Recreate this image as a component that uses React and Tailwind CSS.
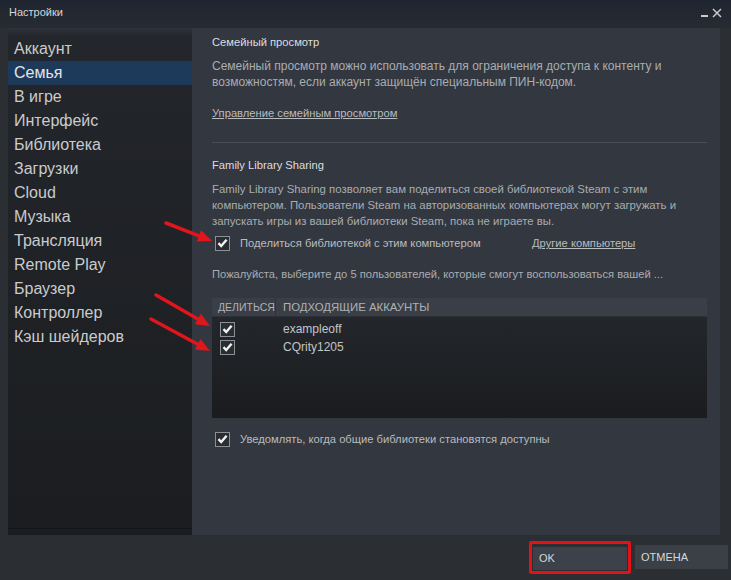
const menu = [
  "Аккаунт",
  "Семья",
  "В игре",
  "Интерфейс",
  "Библиотека",
  "Загрузки",
  "Cloud",
  "Музыка",
  "Трансляция",
  "Remote Play",
  "Браузер",
  "Контроллер",
  "Кэш шейдеров",
];

const accounts = ["exampleoff", "CQrity1205"];

const Check = ({ className = "" }) => (
  <span
    className={`flex items-center justify-center w-[15px] h-[15px] border border-[#8b9096] bg-[#2a2d32] ${className}`}
  >
    <svg width="11" height="10" viewBox="0 0 11 10">
      <path d="M1.5 5.2 L4.2 8 L9.6 1.8" stroke="#f2f2f2" strokeWidth="2.4" fill="none" />
    </svg>
  </span>
);

const Arrow = ({ x1, y1, x2, y2 }) => {
  const a = Math.atan2(y2 - y1, x2 - x1);
  const l = 14;
  const w = 6;
  const bx = x2 - l * Math.cos(a);
  const by = y2 - l * Math.sin(a);
  const px = -Math.sin(a) * w;
  const py = Math.cos(a) * w;
  return (
    <g>
      <line x1={x1} y1={y1} x2={bx} y2={by} stroke="#e0161c" strokeWidth="3.5" strokeLinecap="round" />
      <polygon points={`${x2},${y2} ${bx + px},${by + py} ${bx - px},${by - py}`} fill="#e0161c" />
    </g>
  );
};

const App = () => {
  return (
    <div
      className="relative w-[731px] h-[580px] bg-[#2b2e33] flex flex-col overflow-hidden"
      style={{ fontFamily: '"Liberation Sans", Arial, sans-serif' }}
    >
      {/* Title bar */}
      <div className="h-[28px] flex items-center justify-between pl-[9px] pr-[9px] pb-[3px] bg-gradient-to-b from-[#1f2530] to-[#272b32]">
        <span className="text-[11px] text-[#d4d6d8]">Настройки</span>
        <div className="flex items-end gap-[4px]">
          <span className="w-[7px] h-[2px] bg-[#c8cacc] mb-[1px]" />
          <svg width="10" height="10" viewBox="0 0 10 10">
            <path d="M1 1 L9 9 M9 1 L1 9" stroke="#c8cacc" strokeWidth="1.5" />
          </svg>
        </div>
      </div>

      {/* Body */}
      <div className="flex h-[507px] pl-[8px] pr-[11px]">
        {/* Sidebar */}
        <div className="w-[184px] flex flex-col bg-gradient-to-b from-[#23262b] to-[#1b1d20]">
          <div className="h-[8px] bg-gradient-to-b from-[#2e333b] to-[#23262b]" />
          <ul className="flex flex-col pt-[1px]">
            {menu.map((item, index) => (
              <li
                key={index}
                className={`h-[24px] pl-[6px] flex items-center text-[16px] text-[#c9cbcd] ${
                  index === 1 ? "bg-[#1e3a5a] text-[#e3e6e9]" : ""
                }`}
              >
                {item}
              </li>
            ))}
          </ul>
          <div className="flex-1" />
          <div className="h-[1px] bg-[#15171a] mb-[6px]" />
        </div>

        {/* Content */}
        <div className="flex-1 bg-[#33373f] pl-[20px] pr-[13px] pt-[6px] text-[11.2px] leading-[16px] text-[#a9adb1]">
          <h2 className="text-[#dcdee0] h-[16px]">Семейный просмотр</h2>
          <p className="mt-[8px] text-[12px]">
            Семейный просмотр можно использовать для ограничения доступа к контенту и
            <br />
            возможностям, если аккаунт защищён специальным ПИН-кодом.
          </p>
          <a href="#" className="block mt-[15px] h-[16px] underline text-[#b9bcbf]">
            Управление семейным просмотром
          </a>
          <div className="mt-[21px] h-[1px] bg-[#4a4f57]" />

          <h2 className="mt-[14px] h-[16px] text-[#dcdee0]">Family Library Sharing</h2>
          <p className="mt-[8px] text-[11.4px]">
            Family Library Sharing позволяет вам поделиться своей библиотекой Steam с этим
            <br />
            компьютером. Пользователи Steam на авторизованных компьютерах могут загружать и
            <br />
            запускать игры из вашей библиотеки Steam, пока не играете вы.
          </p>
          <div className="flex items-center mt-[6px] h-[16px] pl-[3px]">
            <Check />
            <span className="ml-[10px] text-[#b9bcbf] w-[292px]">Поделиться библиотекой с этим компьютером</span>
            <a href="#" className="underline text-[#b9bcbf]">Другие компьютеры</a>
          </div>
          <p className="mt-[15px] h-[16px]">
            Пожалуйста, выберите до 5 пользователей, которые смогут воспользоваться вашей ...
          </p>

          {/* Accounts table */}
          <div className="mt-[16px] h-[120px] flex flex-col bg-gradient-to-b from-[#25282d] to-[#1a1c1f]">
            <div className="h-[18px] flex items-center bg-[#3a3e46] text-[#aeb2b6]">
              <span className="w-[64px] pl-[6px] h-full flex items-center border-r border-[#2f3339] text-[10.5px]">
                ДЕЛИТЬСЯ
              </span>
              <span className="pl-[7px] text-[11.4px]">ПОДХОДЯЩИЕ АККАУНТЫ</span>
            </div>
            <div className="h-[4px] border-t border-[#2e3238]" />
            {accounts.map((acc) => (
              <div key={acc} className="h-[18px] flex items-center">
                <Check className="ml-[8px] w-[13px] h-[13px]" />
                <span className="ml-[48px] text-[12px] text-[#c2c5c8]">{acc}</span>
              </div>
            ))}
          </div>

          <div className="flex items-center mt-[13px] h-[16px] pl-[3px]">
            <Check />
            <span className="ml-[10px] text-[#b9bcbf]">Уведомлять, когда общие библиотеки становятся доступны</span>
          </div>
        </div>
      </div>

      {/* Bottom buttons */}
      <div className="flex-1 flex justify-end items-start pt-[6px] pr-[3px] gap-[4px]">
        <div className="border-[3px] border-[#e3121a] rounded-[2px] p-[1px]">
          <button className="w-[94px] h-[23px] bg-[#3d4149] text-left pl-[6px] text-[11px] text-[#d6d8da]">OK</button>
        </div>
        <button className="mt-[4px] w-[93px] h-[24px] bg-[#3b3f46] text-left pl-[6px] text-[11px] text-[#d6d8da]">
          ОТМЕНА
        </button>
      </div>

      {/* Annotation arrows */}
      <svg className="absolute inset-0 pointer-events-none" width="731" height="580">
        <Arrow x1={166} y1={223} x2={212} y2={241} />
        <Arrow x1={156} y1={295} x2={210} y2={326} />
        <Arrow x1={151} y1={319} x2={210} y2={351} />
      </svg>
    </div>
  );
};

export default App;
